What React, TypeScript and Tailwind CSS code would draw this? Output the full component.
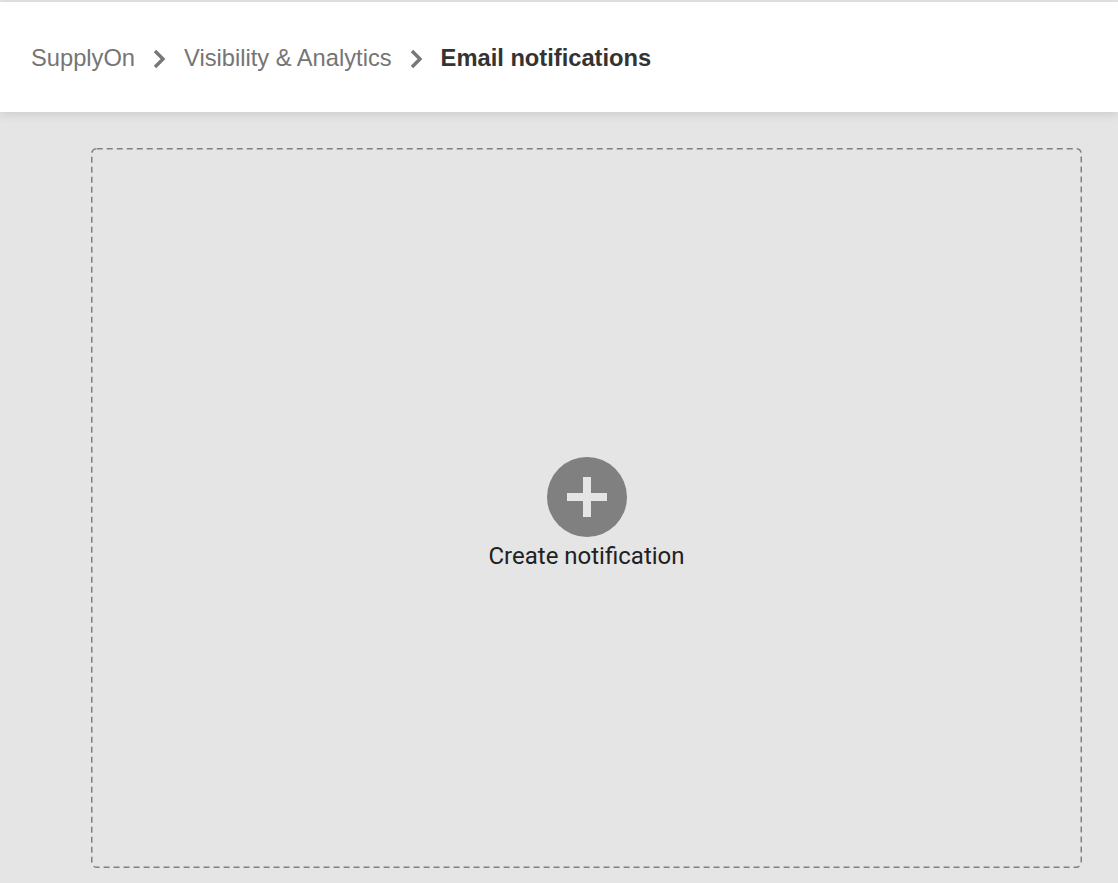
import React from "react";

function Chevron() {
  return (
    <svg width="13" height="20" viewBox="0 0 13 20" className="shrink-0">
      <path d="M2 2 L10 10 L2 18" fill="none" stroke="#777777" strokeWidth="3.4" />
    </svg>
  );
}

export default function App() {
  return (
    <div className="min-h-[883px] bg-[#e5e5e5] flex flex-col" style={{ fontFamily: "'Liberation Sans', Arial, sans-serif" }}>
      {/* Header */}
      <header className="mt-[2px] h-[110px] bg-white flex items-center pl-[31px] shadow-[0_2px_10px_rgba(0,0,0,0.12)] relative z-10">
        <nav className="flex items-center gap-[18px] text-[23.7px] leading-none pt-[4px]">
          <span className="text-[#757575]">SupplyOn</span>
          <Chevron />
          <span className="text-[#757575]">Visibility &amp; Analytics</span>
          <Chevron />
          <span className="font-bold text-[#333333]">Email notifications</span>
        </nav>
      </header>

      {/* Content */}
      <main className="flex-1 pt-[36px] pb-[15px] pl-[91px] pr-[36px]">
        <div className="relative h-[720px] flex items-center justify-center">
          <svg className="absolute inset-0 w-full h-full pointer-events-none" preserveAspectRatio="none">
            <rect x="0.75" y="0.75" rx="5" fill="none" stroke="#808080" strokeWidth="1.5" strokeDasharray="6 4" style={{ width: "calc(100% - 1.5px)", height: "calc(100% - 1.5px)" }} />
          </svg>
          <button className="flex flex-col items-center mt-[12px] cursor-pointer" style={{ fontFamily: "Roboto, 'Noto Sans', sans-serif" }}>
            <span className="w-[80px] h-[80px] rounded-full bg-[#808080] flex items-center justify-center">
              <svg width="40" height="40" viewBox="0 0 40 40">
                <rect x="16" y="0" width="8" height="40" fill="#e5e5e5" />
                <rect x="0" y="16" width="40" height="8" fill="#e5e5e5" />
              </svg>
            </span>
            <span className="mt-[4px] text-[24px] leading-[30px] text-[#212121]">Create notification</span>
          </button>
        </div>
      </main>
    </div>
  );
}
